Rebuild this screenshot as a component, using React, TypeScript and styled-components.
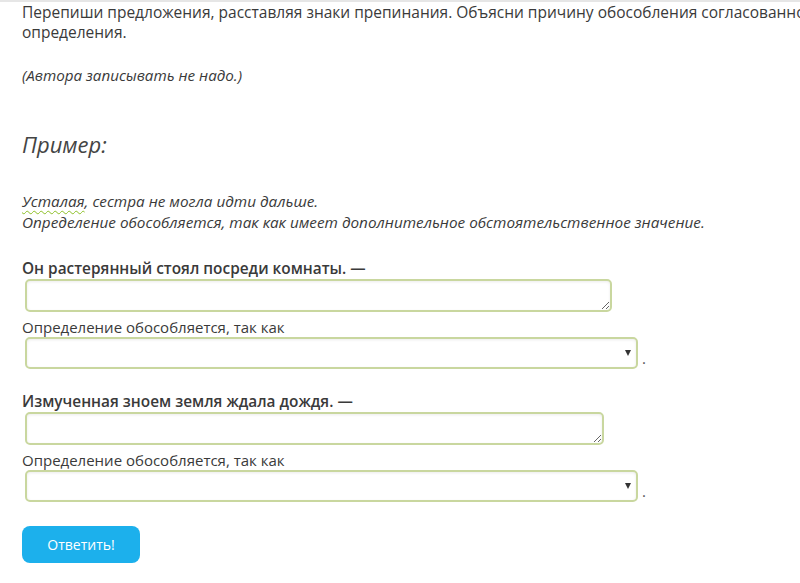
import { createGlobalStyle, styled } from 'styled-components';

const GlobalStyle = createGlobalStyle`
  html, body {
    margin: 0;
    padding: 0;
    background: #ffffff;
    overflow: hidden;
  }
  body {
    font-family: 'Open Sans', 'Noto Sans', sans-serif;
    color: #3a3a3a;
  }
`;

const Page = styled.div`
  width: 880px;
  border-top: 2px solid #e6e6e6;
  padding: 0 0 0 22px;
`;

const Paragraph = styled.p`
  margin: 0 0 23px;
  font-size: 15.5px;
  line-height: 20px;
`;

const Note = styled.p`
  margin: 0;
  font-size: 15.2px;
  line-height: 20px;
  font-style: italic;
`;

const Heading = styled.h2`
  margin: 43px 0 0;
  font-size: 22px;
  line-height: 32px;
  font-weight: 400;
  font-style: italic;
  color: #444;
`;

const Example = styled.div`
  margin-top: 31px;
  font-size: 15.3px;
  line-height: 21px;
  font-style: italic;
  color: #3a3a3a;
`;

const Squiggle = styled.span`
  text-decoration: underline wavy #8cbf26;
  text-decoration-thickness: 1px;
  text-underline-offset: 3px;
`;

const Task = styled.div<{ $top: number }>`
  margin-top: ${p => p.$top}px;
`;

const Question = styled.div`
  font-size: 15.4px;
  line-height: 20px;
  font-weight: 600;
  color: #3a3a3a;
`;

const Answer = styled.textarea<{ $width: number }>`
  display: block;
  box-sizing: border-box;
  width: ${p => p.$width}px;
  height: 33px;
  margin: 0 0 0 3px;
  border: 2px solid #c9d79f;
  border-radius: 5px;
  box-shadow: inset 0 1px 3px rgba(0, 0, 0, 0.08);
  background: #fff;
  font-family: inherit;
  font-size: 14px;
  resize: vertical;
  outline: none;
`;

const Label = styled.div`
  margin-top: 5px;
  font-size: 15px;
  line-height: 20px;
  color: #3a3a3a;
`;

const SelectRow = styled.div`
  display: flex;
  align-items: flex-end;
  gap: 4px;
  margin: 0 0 0 3px;
  font-size: 15px;
`;

const Choice = styled.div`
  box-sizing: border-box;
  width: 613px;
  height: 32px;
  border: 2px solid #c9d79f;
  border-radius: 5px;
  box-shadow: inset 0 1px 3px rgba(0, 0, 0, 0.08);
  background: #fff;
  display: flex;
  align-items: center;
  justify-content: flex-end;
  padding-right: 5px;
`;

const Arrow = styled.span`
  width: 0;
  height: 0;
  border-left: 3px solid transparent;
  border-right: 3px solid transparent;
  border-top: 6px solid #333;
`;

const Dot = styled.span`
  line-height: 22px;
  color: #555;
`;

const Submit = styled.button`
  margin-top: 24px;
  width: 118px;
  height: 37px;
  border: none;
  border-radius: 8px;
  background: #1cb0ec;
  color: #ffffff;
  font-family: 'Open Sans', 'Noto Sans', sans-serif;
  font-size: 14px;
  cursor: pointer;
`;

type Item = { sentence: string; width: number; top: number };

const items: Item[] = [
  { sentence: 'Он растерянный стоял посреди комнаты. —', width: 587, top: 26 },
  { sentence: 'Измученная зноем земля ждала дождя. —', width: 579, top: 23 },
];

export default function App() {
  return (
    <>
      <GlobalStyle />
      <Page>
        <Paragraph>
          Перепиши предложения, расставляя знаки препинания. Объясни причину обособления согласованного
          определения.
        </Paragraph>
        <Note>(Автора записывать не надо.)</Note>
        <Heading>Пример:</Heading>
        <Example>
          <div>
            <Squiggle>Усталая</Squiggle>, сестра не могла идти дальше.
          </div>
          <div>Определение обособляется, так как имеет дополнительное обстоятельственное значение.</div>
        </Example>
        {items.map(item => (
          <Task key={item.sentence} $top={item.top}>
            <Question>{item.sentence}</Question>
            <Answer $width={item.width} />
            <Label>Определение обособляется, так как</Label>
            <SelectRow>
              <Choice>
                <Arrow />
              </Choice>
              <Dot>.</Dot>
            </SelectRow>
          </Task>
        ))}
        <Submit>Ответить!</Submit>
      </Page>
    </>
  );
}
